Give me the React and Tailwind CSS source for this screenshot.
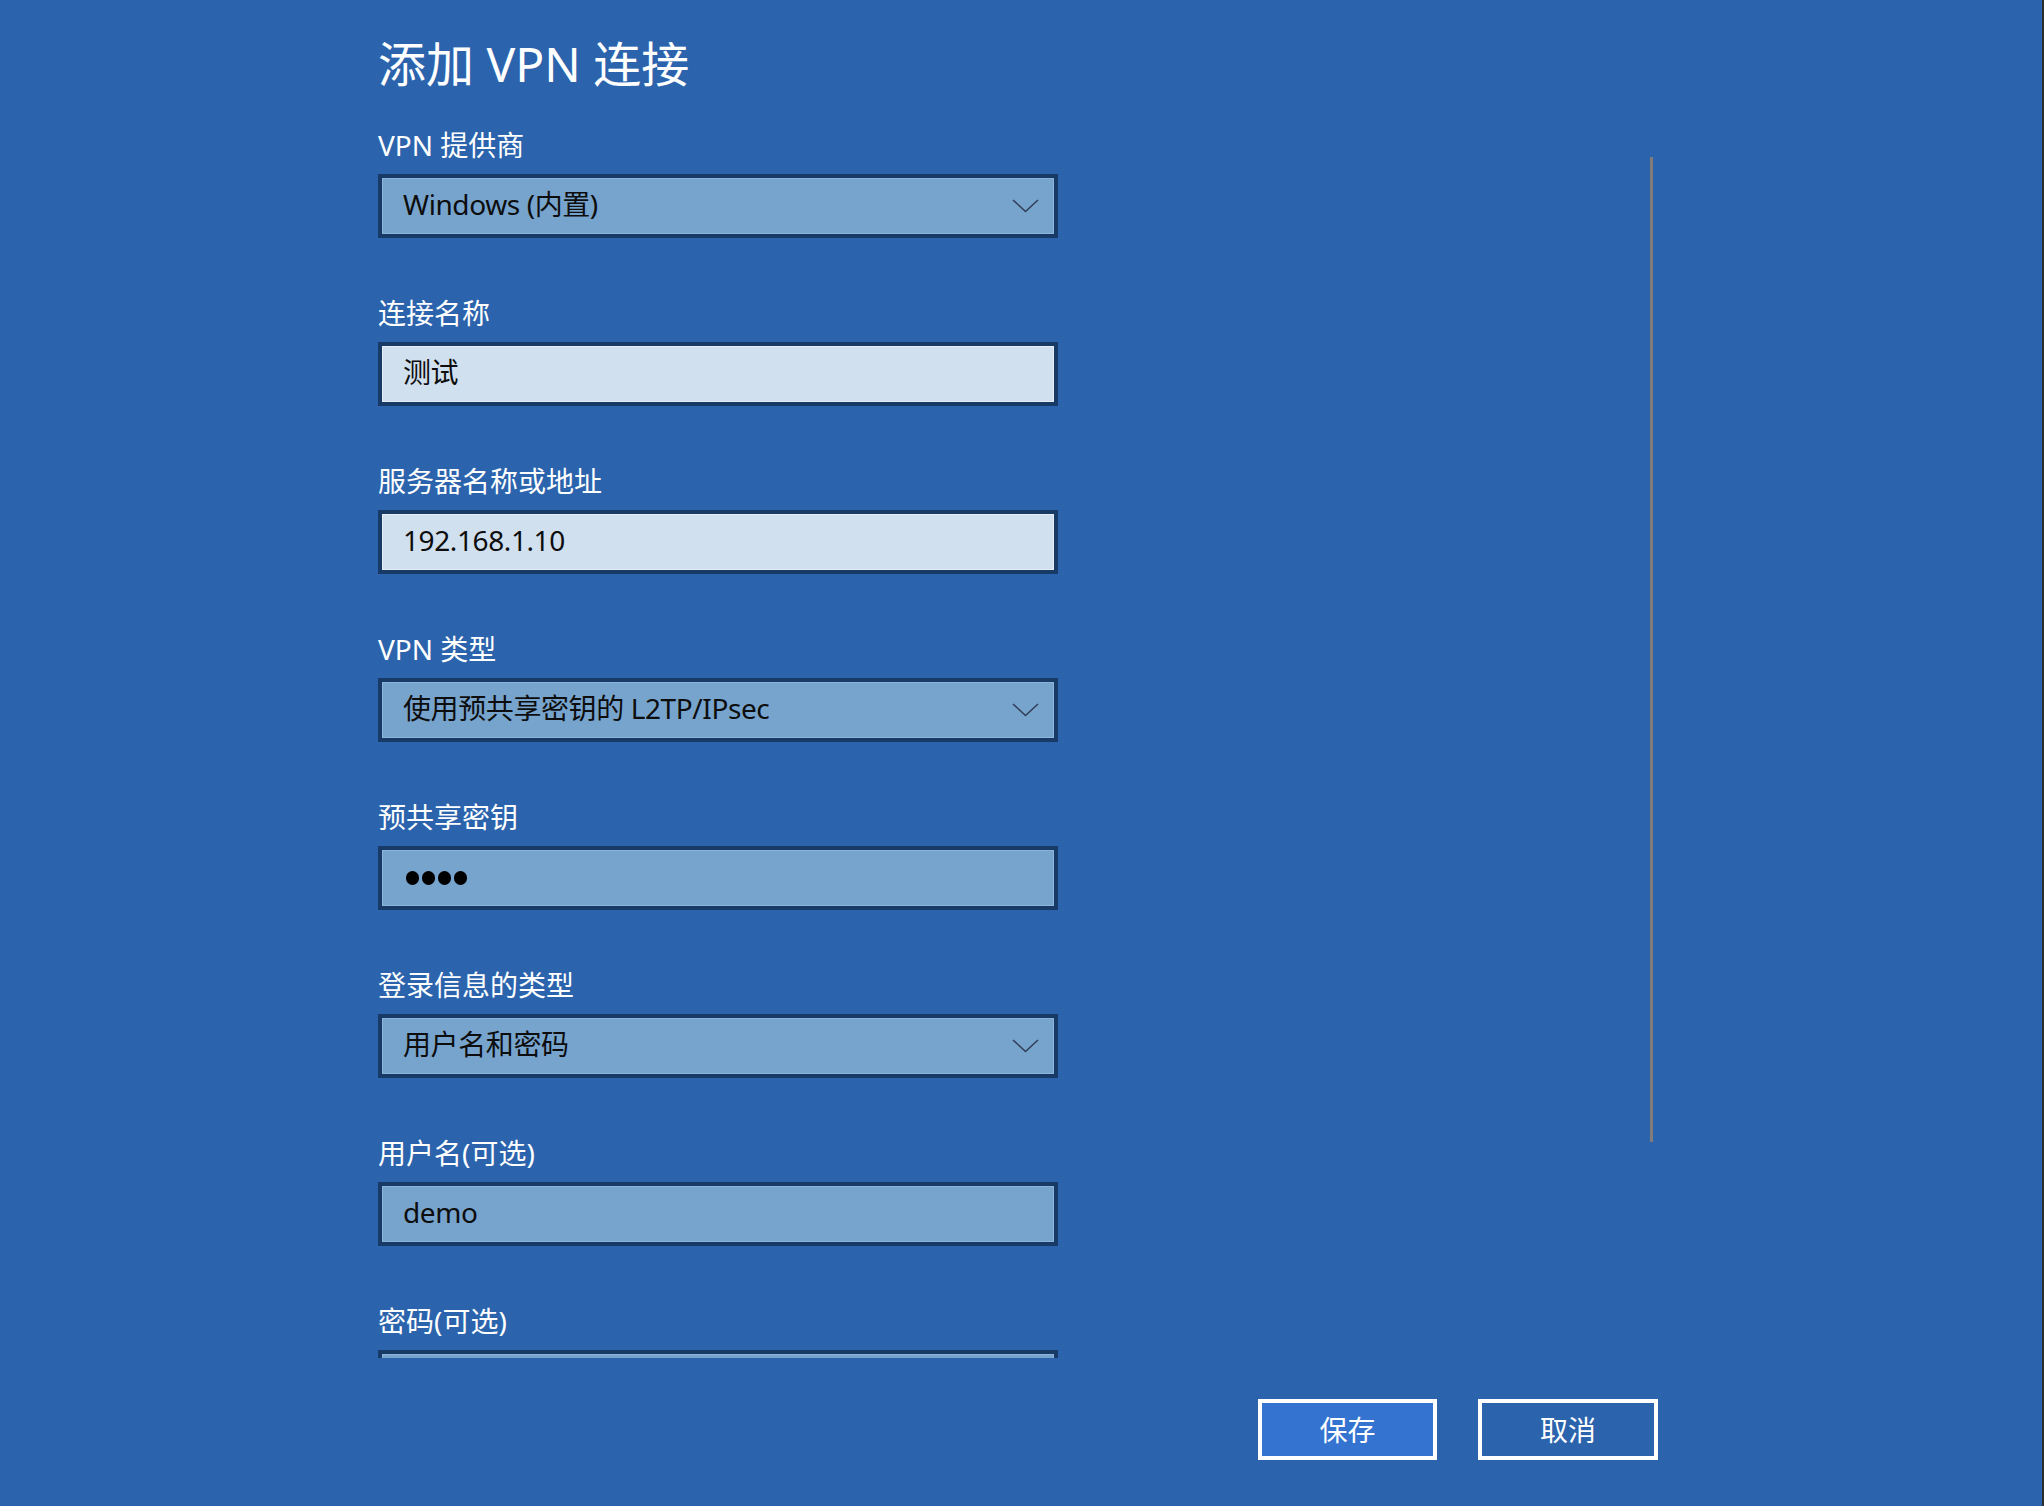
import React from 'react';

const fields = [
    { label: 'VPN 提供商', value: 'Windows (内置)', kind: 'select' },
    { label: '连接名称', value: '测试', kind: 'text' },
    { label: '服务器名称或地址', value: '192.168.1.10', kind: 'text' },
    { label: 'VPN 类型', value: '使用预共享密钥的 L2TP/IPsec', kind: 'select' },
    { label: '预共享密钥', value: '', kind: 'password' },
    { label: '登录信息的类型', value: '用户名和密码', kind: 'select' },
    { label: '用户名(可选)', value: 'demo', kind: 'filled' },
    { label: '密码(可选)', value: '', kind: 'filled' },
];

function Chevron() {
    return (
        <svg width="27" height="14" viewBox="0 0 27 14" fill="none">
            <polyline points="1,1 13.5,12.5 26,1" stroke="#2f3e54" strokeWidth="1.5" />
        </svg>
    );
}

function Field({ field }) {
    const light = field.kind === 'text';
    return (
        <div className="flex flex-col">
            <div className="h-[40px] leading-[38px] text-[28px] text-white mb-[8px]">{field.label}</div>
            <div
                className={
                    'w-[680px] h-[64px] shrink-0 border-[4px] border-[#183a66] flex items-center pl-[21px] pr-[15px] pb-[5px] text-[28px] leading-none tracking-[-0.4px] text-[#0d0d0d] ' +
                    (light ? 'bg-[#d1e0ef] shadow-[inset_0_0_0_1px_#e6eef7]' : 'bg-[#77a4cd] shadow-[inset_0_0_0_1px_#8db4d9]')
                }
            >
                {field.kind === 'password' ? (
                    <div className="flex gap-[3px] pl-[3px] pt-[5px]">
                        <span className="w-[13px] h-[14px] rounded-full bg-black" />
                        <span className="w-[13px] h-[14px] rounded-full bg-black" />
                        <span className="w-[13px] h-[14px] rounded-full bg-black" />
                        <span className="w-[13px] h-[14px] rounded-full bg-black" />
                    </div>
                ) : (
                    <span className="flex-1">{field.value}</span>
                )}
                {field.kind === 'select' && (
                    <div className="pt-[5px]">
                        <Chevron />
                    </div>
                )}
            </div>
        </div>
    );
}

export default function App() {
    return (
        <div className="w-[2044px] h-[1506px] bg-[#2b64ad] flex overflow-hidden font-['Noto_Sans','Noto_Sans_CJK_SC',sans-serif]">
            <div className="flex-1 flex flex-col">
                <div className="flex h-[1358px] shrink-0">
                    {/* scrolling form */}
                    <div className="w-[1650px] pl-[378px] pt-[36px] overflow-hidden">
                        <h1 className="text-[48px] leading-[56px] font-normal text-white mb-[34px]">添加 VPN 连接</h1>
                        <div className="flex flex-col gap-[56px]">
                            {fields.map((f) => (
                                <Field key={f.label} field={f} />
                            ))}
                        </div>
                    </div>
                    {/* scrollbar */}
                    <div className="pt-[157px]">
                        <div className="w-[3px] h-[985px] bg-[#817c79]" />
                    </div>
                </div>

                <div className="flex gap-[41px] pl-[1258px] pt-[41px]">
                    <button className="w-[179px] h-[61px] border-[4px] border-white bg-[#3473d0] text-white text-[28px] leading-none flex items-center justify-center">
                        保存
                    </button>
                    <button className="w-[180px] h-[61px] border-[4px] border-white bg-[#2b64ad] text-white text-[28px] leading-none flex items-center justify-center">
                        取消
                    </button>
                </div>
            </div>
            <div className="w-[2px] h-full bg-[#2e2e2e]" />
        </div>
    );
}
